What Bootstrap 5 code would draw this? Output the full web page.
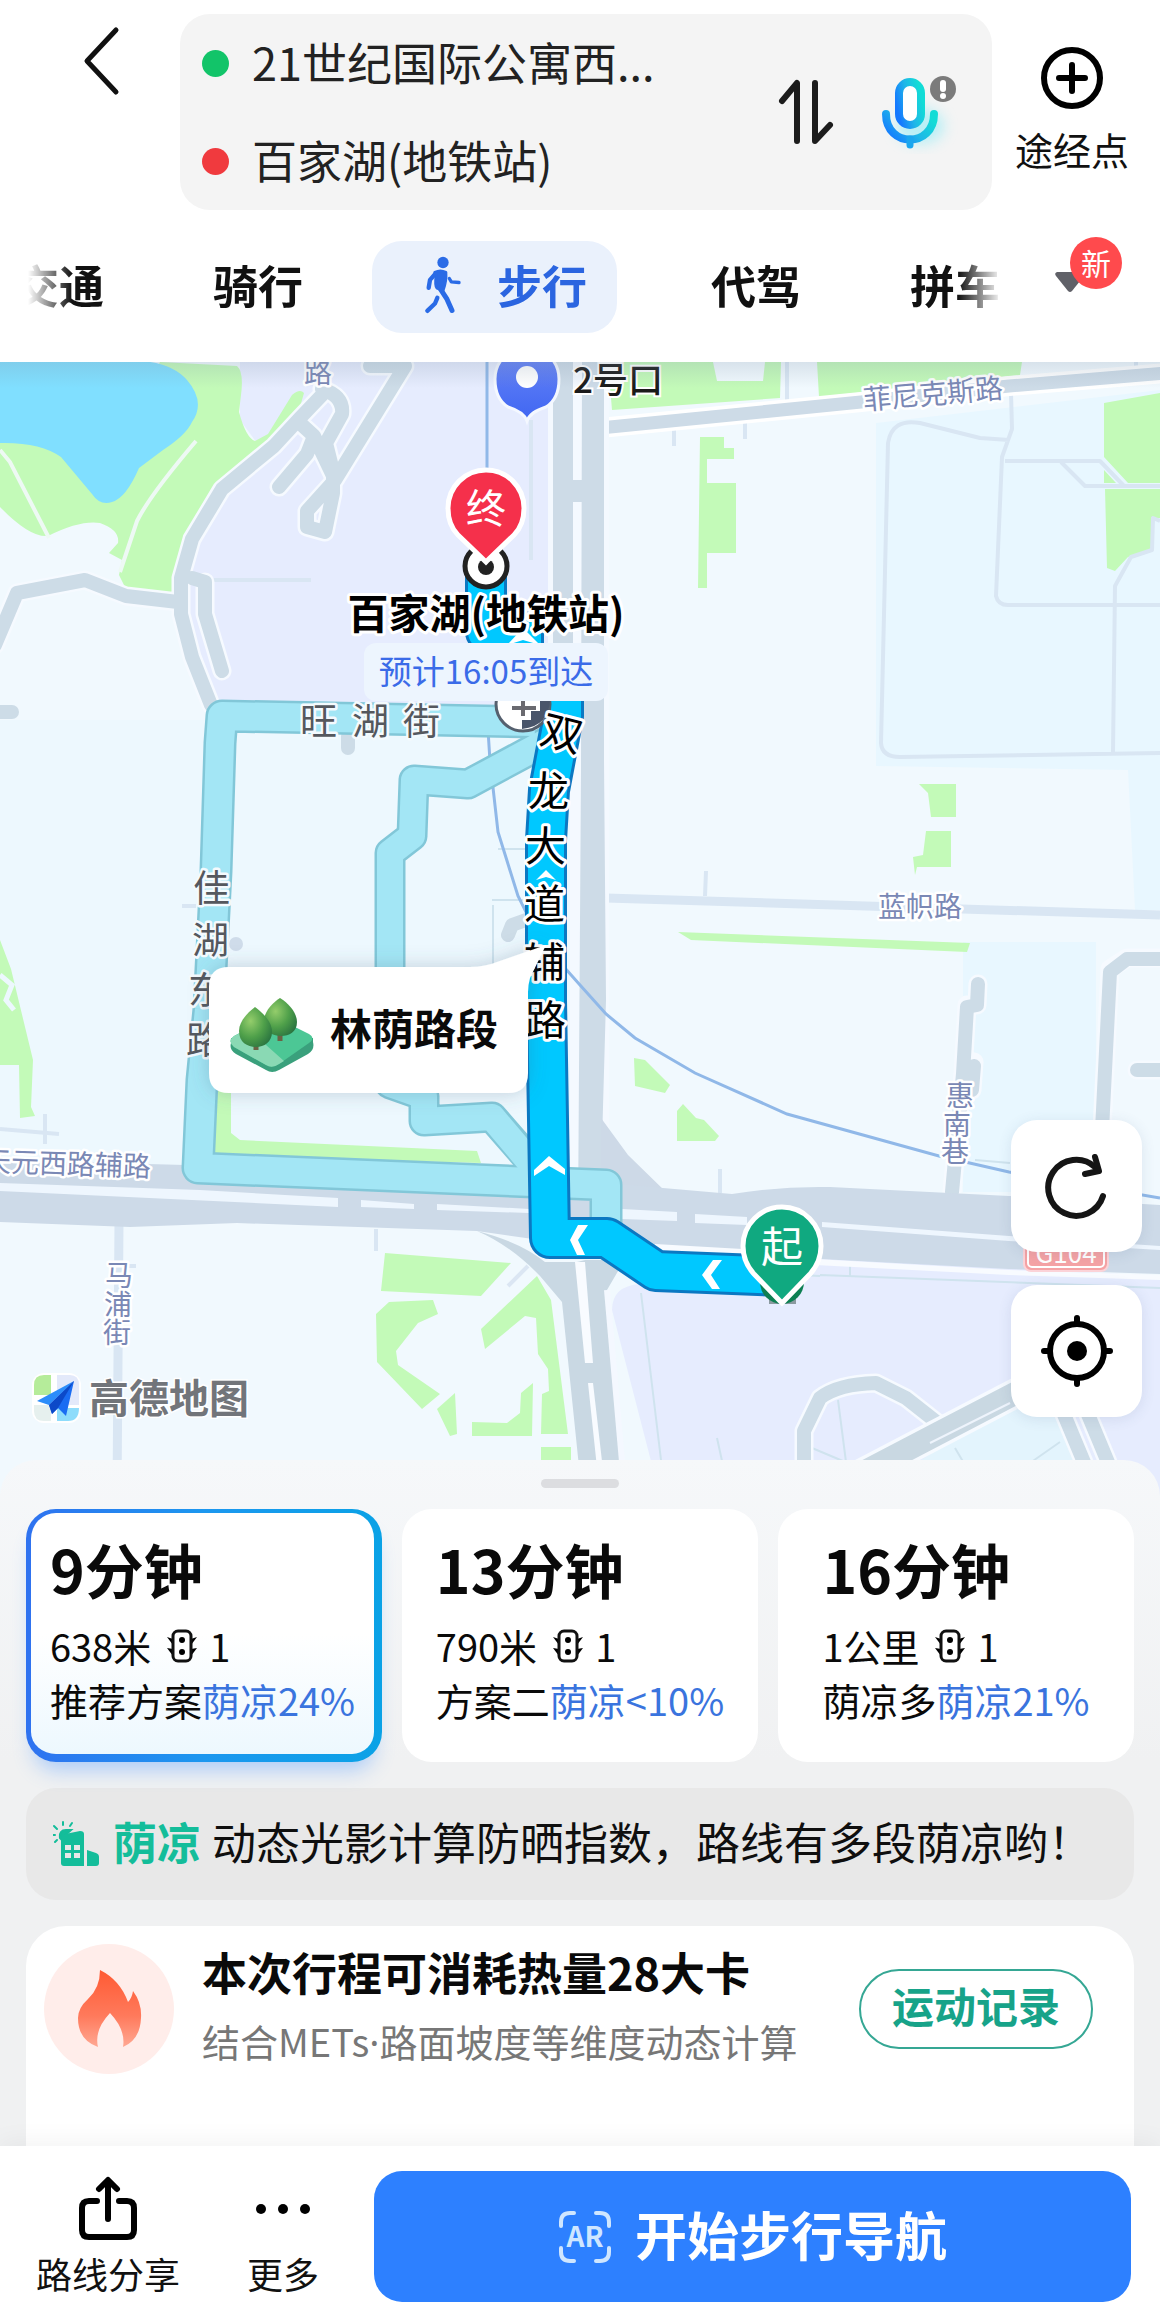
<!DOCTYPE html>
<html lang="zh-CN">
<head>
<meta charset="utf-8">
<meta name="viewport" content="width=device-width, initial-scale=1">
<title>步行路线</title>
<link href="https://cdn.jsdelivr.net/npm/bootstrap@5.3.0/dist/css/bootstrap.min.css" rel="stylesheet">
<style>
  body { font-family: "Noto Sans CJK SC", "Noto Sans", sans-serif; color: #111; background: #fff; }
  button { font-family: inherit; }
  svg { display: block; flex-shrink: 0; }
  .bare { border: 0; background: none; padding: 0; color: inherit; }

  /* header */
  .top-row { padding: 14px 24px 0 80px; }
  .back-btn { width: 100px; height: 100px; padding-bottom: 6px; }
  .route-box { background: #f4f4f4; border-radius: 30px; height: 196px; padding: 0 34px 0 22px; }
  .route-line { gap: 23px; }
  .spot { width: 27px; height: 27px; border-radius: 50%; flex-shrink: 0; }
  .spot-from { background: #12c469; }
  .spot-to { background: #f03a3e; }
  .route-input { border: 0; background: transparent; font-size: 45px; line-height: 60px; height: 70px; color: #222; width: 100%; min-width: 0; padding: 0 0 4px; outline: 0; }
  .via-btn { font-size: 38px; line-height: 48px; width: 128px; padding-top: 33px; gap: 16px; margin-left: 16px; }
  .mode-row { height: 152px; padding: 0 28px; }
  .mode-strip { gap: 109px; height: 92px; width: 974px; margin-top: 2px;
    -webkit-mask-image: linear-gradient(90deg, transparent 0, #000 44px, #000 930px, transparent 974px);
    mask-image: linear-gradient(90deg, transparent 0, #000 44px, #000 930px, transparent 974px); }
  .mode-strip button { font-size: 45px; line-height: 60px; font-weight: 700; flex-shrink: 0; padding-bottom: 4px; }
  .mode-strip button:first-child { margin-left: -14px; }
  .mode-strip .mode-on { background: #eaf1fc; color: #2b65e0; border-radius: 30px; height: 92px; padding: 0 30px 4px 51px; gap: 34px; margin: 0 -15px 0 -40px; }
  .more-modes { width: 72px; height: 72px; margin-left: 51px; margin-top: -26px; padding-top: 17px; }
  .new-tag { position: absolute; left: 17px; top: 0; width: 52px; height: 52px; border-radius: 50%; background: #ff4a4d; color: #fff; font-size: 30px; line-height: 50px; text-align: center; }

  /* map */
  .map-area { height: 1134px; overflow: hidden; background: #f1f9fe; }
  .map-area > svg { width: 100%; height: 100%; }
  .map-tools { position: absolute; right: 18px; top: 758px; gap: 33px; }
  .map-tools button { width: 131px; height: 132px; border: 0; border-radius: 26px; background: #fff; box-shadow: 0 2px 14px rgba(60,80,120,.12); }
  .green { fill: #c3fab8; }
  .road { fill: none; stroke: #cddce7; stroke-width: 14; stroke-linecap: round; stroke-linejoin: round; }
  .casing { fill: none; stroke: #f6faff; stroke-width: 19; stroke-linecap: round; stroke-linejoin: round; }
  .lane { fill: none; stroke: #d9e6f3; stroke-width: 4; stroke-linejoin: round; }
  .lane-wide { fill: none; stroke: #d9e6f3; stroke-width: 9; }
  .metro { fill: none; stroke: #90b8e8; stroke-width: 3; }
  .lbl { font-size: 28px; fill: #7a88b5; stroke: #fff; stroke-width: 5; paint-order: stroke; stroke-linejoin: round; }
  .lbl-alt { font-size: 37px; fill: #55585e; stroke: #f4fafd; stroke-width: 5; paint-order: stroke; stroke-linejoin: round; }
  .lbl-main { font-size: 41px; fill: #000; stroke: #fff; stroke-width: 6; paint-order: stroke; stroke-linejoin: round; }
  .mid { text-anchor: middle; }

  /* sheet */
  .sheet { margin-top: -36px; position: relative; background: linear-gradient(#f6f8fa, #f0f1f2 300px); border-radius: 36px 36px 0 0; padding: 19px 26px 0; }
  .grip { width: 78px; height: 9px; border-radius: 5px; background: #dcdde0; margin-bottom: 21px; }
  .plan-list { gap: 20px; grid-template-columns: repeat(3, minmax(0, 1fr)); }
  .plan { height: 253px; border: 0; border-radius: 30px; background: #fff; padding: 0; text-align: left; color: #0a0a0a; font-size: 38px; line-height: 54px; }
  .plan-inner { width: fit-content; padding-top: 18px; white-space: nowrap; margin: 0 auto; }
  .plan-time { font-size: 59px; line-height: 84px; font-weight: 700; margin-bottom: 8px; }
  .plan-info { gap: 12px; }
  .plan-info svg { margin-left: 4px; }
  .plan-on { border-style: solid; border-color: transparent; border-width: 4px 8px 8px 5px;
    background: linear-gradient(#fff 50%, #edf8fe) padding-box, linear-gradient(90deg, #2f72f0, #1c97ef 50%, #0aa2e6) border-box;
    box-shadow: 0 16px 20px -8px rgba(90,160,255,.45); }
  .plan-on .plan-inner { padding-top: 14px; }
  .shade { color: #3a74de; }
  .tip-bar { margin-top: 26px; height: 112px; border-radius: 30px; background: #e8e8e8; padding: 0 27px; font-size: 44px; line-height: 60px; white-space: nowrap; color: #0f0f0f; }
  .tip-bar span { padding-bottom: 6px; }
  .tip-tag { color: #14bd9a; font-weight: 700; margin: 0 11px 0 14px; }
  .burn { margin-top: 26px; height: 220px; border-radius: 40px 40px 0 0; background: #fff; padding: 14px 41px 0 18px; gap: 28px; }
  .burn > svg { margin-top: 4px; }
  .burn-title { font-size: 45px; line-height: 64px; font-weight: 700; color: #0a0a0a; margin: 0; }
  .burn-sub { font-size: 38px; line-height: 56px; color: #777; margin: 9px 0 0; }
  .latin { font-family: "Noto Sans", sans-serif; }
  .log-btn { width: 234px; height: 80px; border: 2px solid #35a794; border-radius: 40px; background: #fff; color: #17a389; font-size: 42px; line-height: 56px; font-weight: 700; margin-top: 29px; padding: 0 0 8px; }

  /* footer */
  .dock { position: relative; height: 161px; background: #fff; padding: 25px 29px 5px 36px; gap: 67px; box-shadow: 0 -4px 24px rgba(0,0,0,.05); }
  .dock-item { font-size: 36px; line-height: 46px; color: #111; gap: 8px; padding-top: 5px; white-space: nowrap; }
  .go-btn { margin-left: -12px; border-radius: 28px; background: #2d80ff; color: #fff; font-size: 52px; line-height: 70px; font-weight: 700; gap: 23px; height: 131px; }
  .go-btn span { padding-bottom: 6px; }
</style>
<script src="https://cdn.jsdelivr.net/npm/bootstrap@5.3.0/dist/js/bootstrap.bundle.min.js"></script>
</head>
<body>

<header>
  <div class="top-row d-flex align-items-start">
    <button class="bare back-btn" aria-label="返回">
      <svg width="42" height="72" viewBox="0 0 42 72" fill="none" stroke="#111" stroke-width="5" stroke-linecap="round" stroke-linejoin="round"><path d="M36 5 7 36 36 67"/></svg>
    </button>
    <form class="route-box d-flex align-items-center flex-grow-1">
      <div class="d-flex flex-column flex-grow-1 h-100">
        <div class="route-line d-flex align-items-center flex-fill">
          <span class="spot spot-from"></span>
          <input class="route-input" aria-label="起点" value="21世纪国际公寓西...">
        </div>
        <div class="route-line d-flex align-items-center flex-fill">
          <span class="spot spot-to"></span>
          <input class="route-input" aria-label="终点" value="百家湖(地铁站)">
        </div>
      </div>
      <button type="button" class="bare" aria-label="交换起终点">
        <svg width="56" height="66" viewBox="0 0 56 66" fill="none" stroke="#1c1c1c" stroke-width="6" stroke-linecap="round" stroke-linejoin="round"><path d="M4 22 19 4V62M37 4V62L52 46"/></svg>
      </button>
      <button type="button" class="bare ms-5" aria-label="语音输入">
        <svg width="76" height="84" viewBox="0 0 76 84">
          <defs><linearGradient id="mic" x1="0" y1=".8" x2="1" y2=".3"><stop offset="0" stop-color="#1478ff"/><stop offset=".5" stop-color="#1fb6e8"/><stop offset="1" stop-color="#12dcd6"/></linearGradient>
          <filter id="glow" x="-50%" y="-50%" width="200%" height="200%"><feGaussianBlur stdDeviation="7"/></filter></defs>
          <ellipse cx="38" cy="56" rx="24" ry="18" fill="#7eeaf7" opacity=".5" filter="url(#glow)"/>
          <rect x="17" y="12" width="22" height="43" rx="11" fill="#fff" stroke="url(#mic)" stroke-width="8"/>
          <path d="M4 44C4 78 52 78 52 44" fill="none" stroke="url(#mic)" stroke-width="8" stroke-linecap="round"/>
          <path d="M28 69v6" stroke="#1aa6ee" stroke-width="7" stroke-linecap="round"/>
          <circle cx="61" cy="19" r="13" fill="#7b7b7b"/><path d="M61 13v6" stroke="#fff" stroke-width="6" stroke-linecap="round"/><circle cx="61" cy="26" r="3" fill="#fff"/>
        </svg>
      </button>
    </form>
    <button class="bare via-btn d-flex flex-column align-items-center">
      <svg width="62" height="62" viewBox="0 0 62 62" fill="none" stroke="#000" stroke-width="6" stroke-linecap="round"><circle cx="31" cy="31" r="28"/><path d="M18 31H44M31 18V44"/></svg>
      途经点
    </button>
  </div>
  <nav class="mode-row d-flex align-items-center" aria-label="出行方式">
    <div class="mode-strip d-flex align-items-center overflow-hidden">
      <button class="bare">交通</button>
      <button class="bare">骑行</button>
      <button class="bare mode-on d-flex align-items-center">
        <svg width="40" height="62" viewBox="130 105 120 185" fill="#2a6be6" stroke="#2a6be6" stroke-linecap="round" stroke-linejoin="round">
          <circle cx="190" cy="130" r="17" stroke="none"/>
          <path d="M166 160Q182 152 198 160Q200 186 190 212L172 206Q166 200 170 170Z" stroke-width="10"/>
          <path d="M168 163 151 182 147 206" fill="none" stroke-width="13"/>
          <path d="M209 178 215 188 238 190" fill="none" stroke-width="10"/>
          <path d="M180 206 202 240 217 274" fill="none" stroke-width="15"/>
          <path d="M173 236 166 253 143 275" fill="none" stroke-width="13"/>
        </svg>
        步行
      </button>
      <button class="bare">代驾</button>
      <button class="bare">拼车</button>
    </div>
    <button class="bare more-modes position-relative" aria-label="更多出行方式">
      <svg width="34" height="24" viewBox="0 0 34 24"><path d="M4 2H30Q33 3 31 6L19 21Q17 23 15 21L3 6Q1 3 4 2Z" fill="#606168"/></svg>
      <span class="new-tag">新</span>
    </button>
  </nav>
</header>

<main>
  <section class="map-area position-relative" aria-label="地图">
    <svg viewBox="0 362 1160 1134" preserveAspectRatio="xMidYMin slice">
      <defs>
        <linearGradient id="haze" x1="0" y1="0" x2="0" y2="1"><stop offset="0" stop-color="#7d92a8" stop-opacity=".22"/><stop offset="1" stop-color="#7d92a8" stop-opacity="0"/></linearGradient>
        <linearGradient id="poi" x1="0" y1="0" x2="0" y2="1"><stop offset="0" stop-color="#6a86f7"/><stop offset="1" stop-color="#3f66f2"/></linearGradient>
        <radialGradient id="leaf" cx=".35" cy=".35" r=".75"><stop offset="0" stop-color="#94cd6b"/><stop offset=".55" stop-color="#4fa04a"/><stop offset="1" stop-color="#2a7440"/></radialGradient>
        <filter id="soft" x="-20%" y="-30%" width="140%" height="170%"><feDropShadow dx="0" dy="0" stdDeviation="10" flood-color="#40607a" flood-opacity=".28"/></filter>
      </defs>
      <rect x="0" y="362" width="1160" height="1134" fill="#f1f9fe"/>
      <rect x="0" y="720" width="600" height="450" fill="#edf8fe"/>
      <!-- districts -->
      <path d="M240 362H566V712H209L185 640 181 580 200 525 262 450 240 420Z" fill="#e6ecfe"/>
      <path d="M876 423 1160 390V910H1135L1128 770 876 766Z" fill="#e8f7ff"/>
      <path d="M963 942H1096V1192H963Z" fill="#e8f7ff"/>
      <path d="M612 1310Q612 1286 640 1284L655 1250 1160 1276V1496H660Z" fill="#e6ecfe"/>
      <path d="M890 1480 1030 1390 1068 1412 1100 1496Z" fill="#e3f4fd"/>
      <!-- lake and parks -->
      <path class="green" d="M160 362 237 366Q244 372 241 395L239 412Q246 438 255 441L268 434 292 395Q300 388 304 393L300 407 259 450 207 503 185 539 172 593 126 589 119 575 122 560 109 553 118 543Q120 530 100 523 80 520 48 536 30 538 0 507V440H120Z"/>
      <path d="M0 361H141Q172 363 187 380 206 402 192 422 186 435 163 450L139 468Q126 498 112 502 100 506 92 494L61 457Q40 442 0 443Z" fill="#80dfff"/>
      <path d="M196 441Q150 495 137 521L120 572M0 450 10 462 49 538" fill="none" stroke="#eef9f4" stroke-width="4"/>
      <path class="green" d="M608 362H781L780 398 612 410Z"/><path d="M713 362H765L763 381H717Z" fill="#f1f9fe"/>
      <path class="green" d="M817 362H1022L1020 375 819 397ZM700 437H724V448H734V459H707V483H736V553H707V588H698ZM1104 403 1160 393V483H1128L1104 457ZM1104 470 1116 483H1104ZM1105 489H1160V518H1152V550L1128 557 1115 571 1107 568Z"/>
      <path class="green" d="M919 784H956V817H931L928 793ZM926 831H951V867H917L915 875 913 857 923 855ZM678 932 970 943 967 952 691 940ZM634 1058 645 1060 670 1085 665 1093 635 1086ZM683 1104 696 1118 704 1120 719 1136 715 1141H677V1111Z"/>
      <path class="green" d="M0 940 11 969 33 1060 31 1107 35 1116 20 1118 19 1065H0ZM218 1080H231V1133L240 1140 477 1151 481 1163 213 1156ZM385 1253 511 1263 481 1296 381 1291ZM433 1300 438 1314 418 1323 396 1351 398 1365 440 1394 422 1409 377 1362 376 1314 389 1302ZM455 1393 457 1434 450 1436 437 1409ZM472 1422 507 1423 520 1413 521 1393 533 1383 532 1436H472ZM537 1276 551 1300 568 1434H541L542 1394 549 1391 548 1369 538 1354 536 1318 525 1316 485 1349 481 1329ZM541 1447H571V1496H541Z"/>
      <path d="M0 975 12 985 6 1000 14 1010" fill="none" stroke="#edf8fe" stroke-width="5"/>
      <!-- minor lanes -->
      <path class="lane" d="M1009 440 980 438 920 423Q892 418 888 443L881 743Q882 757 900 757L1160 753M1011 393 1012 429 1002 457 996 596Q998 605 1008 605H1160M1005 461H1100L1124 486H1160M1061 462 1085 486H1124M1160 521 1153 518 1152 550 1131 557 1115 586 1113 752"/>
      <path class="lane" d="M787 362V402M674 427V446M745 420V439M706 871 705 896M720 1169V1193M0 1129 59 1134M45 1114V1144M376 1229V1251M200 580H311M531 420V560M1136 362V378"/>
      <path d="M641 1293 661 1460M717 1438 724 1470M838 1400 846 1462M812 1448 850 1464M955 1448 968 1470M1060 1442 1020 1470M820 1275 1160 1288M690 1270 820 1276M850 1262V1276M975 1160 1010 1163M492 900H530M498 849H530M493 905V965" fill="none" stroke="#cfe3ee" stroke-width="2"/>
      <path class="lane-wide" d="M606 898 1160 915M119 1222 117 1496"/>
      <path class="lane" d="M119 1266H136M182 906H196"/>
      <!-- roads on the west side -->
      <path class="casing" d="M322 395 300 418 274 446 222 489 192 539 181 578V614L192 657 211 705M-5 645 17 593 85 580 126 596 178 602M205 582V614L222 671M370 366H405L335 480 307 511V527L325 532 333 493V471L326 443 342 414Q344 396 322 389M302 425 314 436 307 454 279 487M314 436 335 480"/>
      <path class="road" d="M322 395 300 418 274 446 222 489 192 539 181 578V614L192 657 211 705M-5 645 17 593 85 580 126 596 178 602M192 578 205 582V614L222 671M370 366H405L335 480 307 511V527L325 532 333 493V471L326 443 342 414Q344 396 322 389M302 425 314 436 307 454 279 487M314 436 335 480"/>
      <path class="road" d="M-6 712H12M348 736V748M508 935 512 925 526 920"/>
      <circle cx="236" cy="944" r="7" fill="#cfdcea"/>
      <!-- roads on the east side -->
      <path d="M600 428 861 402 1009 386 1165 373" fill="none" stroke="#fff" stroke-width="20"/>
      <path d="M600 428 861 402 1009 386 1165 373" fill="none" stroke="#cddbe7" stroke-width="13"/>
      <path class="casing" d="M978 984 977 1005M967 1005 963 1074 952 1192M974 1062 972 1090M1102 1130 1110 969 1127 958H1170M1137 1070H1170"/>
      <path class="road" d="M978 984 977 1005 967 1007 963 1074 952 1192M974 1066 972 1090M1102 1130 1110 972 1127 959H1170M1137 1070H1170"/>
      <path class="casing" d="M804 1496V1431L820 1398Q838 1384 876 1383L906 1398 939 1424"/>
      <path class="road" d="M804 1496V1431L820 1398Q838 1384 876 1383L906 1398 939 1424"/>
      <path d="M830 1490 939 1433 1060 1370" fill="none" stroke="#f6faff" stroke-width="30"/>
      <path d="M830 1490 939 1433 1060 1370" fill="none" stroke="#c9d8e2" stroke-width="23"/>
      <path d="M930 1443 1010 1403" stroke="#eef4fc" stroke-width="2"/>
      <path class="casing" d="M1058 1400 1098 1496M1082 1400 1122 1496"/><path class="road" d="M1058 1400 1098 1496M1082 1400 1122 1496"/>
      <!-- Shuanglong avenue -->
      <path d="M548 362H609V1130L620 1150 612 1200H570V700H548Z" fill="#f4f9ff"/>
      <path d="M553 362H573V700H553ZM582 362H604V760L606 1000 602 1143 606 1220H578L581 770Z" fill="#cddbe7"/>
      <path d="M573 480H583V502H573Z" fill="#cddbe7"/>
      <path d="M601 1118 628 1155 668 1194H622L601 1168Z" fill="#cdd9e7"/>
      <!-- Tianyuan west road -->
      <path d="M0 1160 185 1165 617 1184 732 1194Q780 1186 830 1187L1009 1196 1160 1205V1274L1009 1269 820 1259 655 1252 540 1240 477 1231 237 1223 130 1227 0 1222Z" fill="#cddae8"/>
      <path d="M0 1183 200 1190 338 1198V1207L0 1191ZM361 1200 414 1204V1209L361 1207ZM437 1204 529 1209V1213L437 1210ZM622 1209 677 1212V1221L622 1219ZM695 1214 747 1217V1225L695 1223ZM822 1222 1009 1236 1160 1246V1250L1009 1241 822 1227Z" fill="#eef6fe"/>
      <path d="M655 1244 760 1250V1256L650 1254ZM815 1259 1009 1270 1160 1275V1280L1009 1275 815 1265Z" fill="#f8fbff"/>
      <path d="M477 1231Q520 1242 545 1262L577 1262 585 1260 610 1260 628 1254 607 1290 625 1496H582L562 1302 540 1276Q510 1245 477 1231Z" fill="#c9d8e3"/>
      <path d="M575 1262H585L593 1363H585ZM588 1383H593L606 1496H600Z" fill="#f8fbff"/>
      <path d="M607 1290 625 1496" stroke="#f4f8ff" stroke-width="6"/>
      <path d="M508 1286 528 1266" stroke="#dbe6f3" stroke-width="4"/>
      <!-- metro lines -->
      <path class="metro" d="M487 362V480M488 730 490 761 498 832 518 896 540 940 580 985 606 1014 635 1038 695 1073 787 1114 939 1156 1009 1172 1160 1198"/>
      <!-- alternative routes -->
      <g fill="none" stroke-linejoin="round">
        <path d="M535 722 222 716 220 743 216 871 209 1009 202 1080 198 1168 606 1185V1228" stroke="#82c7d8" stroke-width="33"/>
        <path d="M548 741 468 784 414 780 412 836 390 853V1084L424 1096V1121L492 1117 532 1163" stroke="#82c7d8" stroke-width="31"/>
        <path d="M535 722 222 716 220 743 216 871 209 1009 202 1080 198 1168 606 1185V1228" stroke="#a3e6f5" stroke-width="28"/>
        <path d="M548 741 468 784 414 780 412 836 390 853V1084L424 1096V1121L492 1117 535 1168" stroke="#a3e6f5" stroke-width="26"/>
        <path d="M486 566V632H523V664L563 690V716L549 790 546 840V1000L550 1238H607L656 1271 783 1276" stroke="#0b78c2" stroke-width="42"/>
        <path d="M486 566V632H523V664L563 690V716L549 790 546 840V1000L550 1238H607L656 1271 783 1276" stroke="#00c8ff" stroke-width="36"/>
      </g>
      <path d="M534 1176 549 1166 565 1175V1169L549 1156 534 1170ZM523 628 540 645 523 640 507 645ZM546 870 556 880 546 877 536 880Z" fill="#fff"/>
      <path d="M588 1225H578L570 1240 577 1255H585L578 1240ZM722 1260H713L702 1275 712 1289H720L711 1275Z" fill="#fff"/>
      <!-- street labels -->
      <text class="lbl mid" x="318" y="383">路</text>
      <text class="lbl mid" x="933" y="404" transform="rotate(-5 933 394)">菲尼克斯路</text>
      <text class="lbl mid" x="920" y="917">蓝帜路</text>
      <text class="lbl" x="-17" y="1174" transform="rotate(2 70 1163)">天元西路辅路</text>
      <text class="lbl" x="105 104 103" y="1286 1315 1343">马浦街</text>
      <text class="lbl" x="946 943 941" y="1106 1135 1162">惠南巷</text>
      <text class="lbl-alt" x="300 352 403" y="735">旺湖街</text>
      <text class="lbl-alt" x="193 192 188 186" y="902 954 1004 1054">佳湖东路</text>
      <!-- metro entrance -->
      <g>
        <circle cx="523" cy="704" r="27" fill="#fff" stroke="#55606e" stroke-width="3"/>
        <path d="M522 729V720H531V711H540V698H550Q550 726 522 729Z" fill="#49556a"/>
        <path d="M512 708H536M523 700V716" stroke="#6a6a70" stroke-width="4"/>
      </g>
      <g class="lbl-main">
        <text x="541" y="748" transform="rotate(14 561 734)">双</text>
        <text x="528 525 524 524 525" y="806 861 919 977 1035">龙大道辅路</text>
      </g>
      <!-- destination -->
      <circle cx="486" cy="566" r="21" fill="#fff" stroke="#222" stroke-width="5"/><circle cx="486" cy="567" r="8" fill="#222"/>
      <path d="M486 562Q482 558 458 535 448 525 448 508A38 38 0 0 1 524 508Q524 525 514 535 490 558 486 562Z" fill="#f5304b" stroke="#fff" stroke-width="5"/>
      <text class="mid" x="486" y="523" font-size="40" fill="#fff">终</text>
      <text class="mid lbl-main" x="486" y="629" font-weight="700">百家湖(地铁站)</text>
      <rect x="364" y="643" width="244" height="58" rx="12" fill="#edf5fe"/>
      <text class="mid" x="486" y="684" font-size="33" fill="#3a6be8">预计16:05到达</text>
      <!-- station exit -->
      <path d="M527 421Q524 412 508 407 495 399 495 379A32 32 0 0 1 559 379Q559 399 546 407 530 412 527 421Z" fill="url(#poi)" stroke="#f4f8ff" stroke-width="3"/>
      <circle cx="527" cy="377" r="11" fill="#fff"/>
      <text x="573" y="393" font-size="35" font-weight="500" fill="#1a1a1a" stroke="#fff" stroke-width="4" paint-order="stroke">2号口</text>
      <!-- start -->
      <path d="M769 1296H796V1304H769Z" fill="#8b9aa0"/><circle cx="782" cy="1282" r="22" fill="#0d7f52"/>
      <path d="M782 1303Q778 1299 754 1274 743 1262 743 1246A39 39 0 0 1 821 1246Q821 1262 810 1274 786 1299 782 1303Z" fill="#10a980" stroke="#fff" stroke-width="5"/>
      <text class="mid" x="782" y="1262" font-size="42" fill="#fff">起</text>
      <!-- highway shield -->
      <rect x="1024" y="1232" width="84" height="39" rx="7" fill="#f5a3a5" stroke="#fbd3d8" stroke-width="2"/>
      <rect x="1028" y="1236" width="76" height="31" rx="4" fill="none" stroke="#fff" stroke-width="2"/>
      <text class="mid" x="1066" y="1263" font-size="26" fill="#fff">G104</text>
      <!-- shaded stretch callout -->
      <path d="M229 967H470Q485 967 500 961L546 945 530 978Q528 985 528 992V1073Q528 1093 508 1093H229Q209 1093 209 1073V987Q209 967 229 967Z" fill="#fff" filter="url(#soft)"/>
      <g>
        <path d="M231 1043Q229 1050 236 1054L266 1070Q272 1074 279 1070L308 1054Q315 1050 313 1042V1038H231Z" fill="#3aa07c"/>
        <path d="M234 1036 266 1019Q272 1016 279 1019L309 1034Q316 1038 309 1043L279 1064Q272 1069 266 1065L234 1047Q227 1041 234 1036Z" fill="#4cc795"/>
        <path d="M234 1036 248 1029 284 1061 279 1064Q272 1069 266 1065L234 1047Q227 1041 234 1036Z" fill="#8ad9b4"/>
        <path d="M280 1028V1041M256 1038V1050" stroke="#6b6244" stroke-width="5"/>
        <path d="M280 998C290 1004 297 1014 297 1022 297 1032 289 1036 281 1036 272 1036 264 1031 264 1021 264 1012 272 1003 280 998Z" fill="url(#leaf)"/>
        <path d="M255 1007C264 1014 272 1022 272 1032 272 1042 264 1047 256 1047 247 1047 239 1042 239 1031 239 1022 247 1013 255 1007Z" fill="url(#leaf)"/>
      </g>
      <text x="330" y="1045" font-size="42" font-weight="700" fill="#0a0a0a">林荫路段</text>
      <!-- brand mark -->
      <g>
        <rect x="32" y="1373" width="49" height="50" rx="12" fill="#fff"/>
        <path d="M34 1395V1385Q34 1375 44 1375H51V1395Z" fill="#b5ec9a"/><path d="M57 1375H70Q79 1375 79 1385V1405H57Z" fill="#e3e9fa"/><path d="M57 1408H79Q79 1421 68 1421H57Z" fill="#8edcfb"/><path d="M34 1405H51V1421H44Q34 1421 34 1411Z" fill="#e6f0ee"/>
        <path d="M74 1381 37 1401 49 1405Z" fill="#2c8dfa"/><path d="M74 1381 49 1405 52 1414 58 1408 66 1416Z" fill="#1a6cf2"/><path d="M49 1405 52 1414 58 1408 74 1381Z" fill="#0c49c8"/>
        <text x="89" y="1413" font-size="40" font-weight="700" fill="#72757a" stroke="#fff" stroke-width="3" paint-order="stroke">高德地图</text>
      </g>
      <rect x="0" y="362" width="1160" height="26" fill="url(#haze)"/>
    </svg>
    <div class="map-tools d-flex flex-column">
      <button class="d-flex align-items-center justify-content-center" aria-label="刷新">
        <svg width="64" height="68" viewBox="0 0 64 68" fill="none" stroke="#151515" stroke-width="6" stroke-linecap="round" stroke-linejoin="round"><path d="M58 44A28 28 0 1 1 50 15"/><path d="M50 5 54 19 40 22"/></svg>
      </button>
      <button class="d-flex align-items-center justify-content-center" aria-label="定位">
        <svg width="74" height="74" viewBox="0 0 74 74" fill="none" stroke="#000" stroke-width="6" stroke-linecap="round"><circle cx="37" cy="37" r="27"/><circle cx="37" cy="37" r="10" fill="#000" stroke="none"/><path d="M37 4V10M37 64V70M4 37H10M64 37H70"/></svg>
      </button>
    </div>
  </section>

  <section class="sheet">
    <div class="grip mx-auto"></div>
    <div class="plan-list d-grid">
      <button class="plan plan-on d-flex align-items-start">
        <div class="plan-inner">
          <div class="plan-time">9分钟</div>
          <div class="plan-info d-flex align-items-center">638米
            <svg width="30" height="34" viewBox="0 0 30 34"><path d="M0 8 6 10V16ZM0 19 6 20V27ZM30 8 24 10V16ZM30 19 24 20V27Z"/><rect x="6" y="2" width="18" height="30" rx="5" fill="#fff" stroke="#111" stroke-width="3"/><circle cx="15" cy="11" r="3"/><circle cx="15" cy="23" r="3"/></svg>1</div>
          <div>推荐方案<span class="shade">荫凉24%</span></div>
        </div>
      </button>
      <button class="plan d-flex align-items-start">
        <div class="plan-inner">
          <div class="plan-time">13分钟</div>
          <div class="plan-info d-flex align-items-center">790米
            <svg width="30" height="34" viewBox="0 0 30 34"><path d="M0 8 6 10V16ZM0 19 6 20V27ZM30 8 24 10V16ZM30 19 24 20V27Z"/><rect x="6" y="2" width="18" height="30" rx="5" fill="#fff" stroke="#111" stroke-width="3"/><circle cx="15" cy="11" r="3"/><circle cx="15" cy="23" r="3"/></svg>1</div>
          <div>方案二<span class="shade">荫凉&lt;10%</span></div>
        </div>
      </button>
      <button class="plan d-flex align-items-start">
        <div class="plan-inner">
          <div class="plan-time">16分钟</div>
          <div class="plan-info d-flex align-items-center">1公里
            <svg width="30" height="34" viewBox="0 0 30 34"><path d="M0 8 6 10V16ZM0 19 6 20V27ZM30 8 24 10V16ZM30 19 24 20V27Z"/><rect x="6" y="2" width="18" height="30" rx="5" fill="#fff" stroke="#111" stroke-width="3"/><circle cx="15" cy="11" r="3"/><circle cx="15" cy="23" r="3"/></svg>1</div>
          <div>荫凉多<span class="shade">荫凉21%</span></div>
        </div>
      </button>
    </div>

    <div class="tip-bar d-flex align-items-center">
      <svg width="46" height="46" viewBox="0 0 46 46" fill="#14bd9a">
        <path d="M7 17Q6 9 13 9L18 9 8 18ZM10 4V1M17 5 19 2M4 8 1 5M2 14H0M4 19 2 21" stroke="#14bd9a" stroke-width="2" stroke-linecap="round"/>
        <path d="M8 17Q8 14 12 13L27 10Q31 10 31 13V45H11Q8 45 8 42Z"/>
        <path d="M34 29 43 32Q46 33 46 36V42Q46 45 43 45H34Z"/>
        <path d="M12 24H18V29H12ZM21 24H27V29H21ZM12 32H18V37H12ZM21 32H27V37H21Z" fill="#e8e8e8"/>
      </svg>
      <span class="tip-tag">荫凉</span><span>动态光影计算防晒指数，路线有多段荫凉哟！</span>
    </div>

    <div class="burn d-flex align-items-start">
      <svg width="130" height="130" viewBox="44 1944 130 130">
        <defs><linearGradient id="fire" x1="0" y1="0" x2="0" y2="1"><stop offset="0" stop-color="#ff5a33"/><stop offset=".6" stop-color="#ff7a5c"/><stop offset="1" stop-color="#ffa893"/></linearGradient></defs>
        <circle cx="109" cy="2009" r="65" fill="#ffedea"/>
        <path d="M100 1970Q120 1980 128 2002 132 1998 133 1991 142 2003 141 2018 140 2040 123 2047 126 2030 110 2013 94 2030 98 2047 78 2040 78 2018 78 2008 88 1999 100 1988 100 1970Z" fill="url(#fire)"/>
      </svg>
      <div class="flex-grow-1">
        <h1 class="burn-title">本次行程可消耗热量28大卡</h1>
        <p class="burn-sub">结合METs<span class="latin">·</span>路面坡度等维度动态计算</p>
      </div>
      <button class="log-btn flex-shrink-0">运动记录</button>
    </div>
  </section>
</main>

<footer class="dock d-flex align-items-start">
  <button class="bare dock-item d-flex flex-column align-items-center">
    <svg width="62" height="66" viewBox="0 0 62 66" fill="none" stroke="#000" stroke-width="6" stroke-linecap="round" stroke-linejoin="round"><path d="M20 25H12Q5 25 5 32V54Q5 61 12 61H50Q57 61 57 54V32Q57 25 50 25H42M31 43V5M22 13 31 4 40 13"/></svg>
    路线分享
  </button>
  <button class="bare dock-item d-flex flex-column align-items-center">
    <svg width="62" height="66" viewBox="0 0 62 66"><circle cx="9" cy="33" r="5"/><circle cx="31" cy="33" r="5"/><circle cx="53" cy="33" r="5"/></svg>
    更多
  </button>
  <button class="bare go-btn flex-grow-1 d-flex align-items-center justify-content-center">
    <svg width="54" height="54" viewBox="0 0 54 54" fill="none" stroke="#cfe6ff" stroke-width="4" stroke-linecap="round"><path d="M3 16V12Q3 3 12 3H16M38 3H42Q51 3 51 12V16M51 38V42Q51 51 42 51H38M16 51H12Q3 51 3 42V38"/><text x="27" y="37" text-anchor="middle" font-size="28" font-weight="700" fill="#cfe6ff" stroke="none">AR</text></svg>
    <span>开始步行导航</span>
  </button>
</footer>
</body>
</html>
